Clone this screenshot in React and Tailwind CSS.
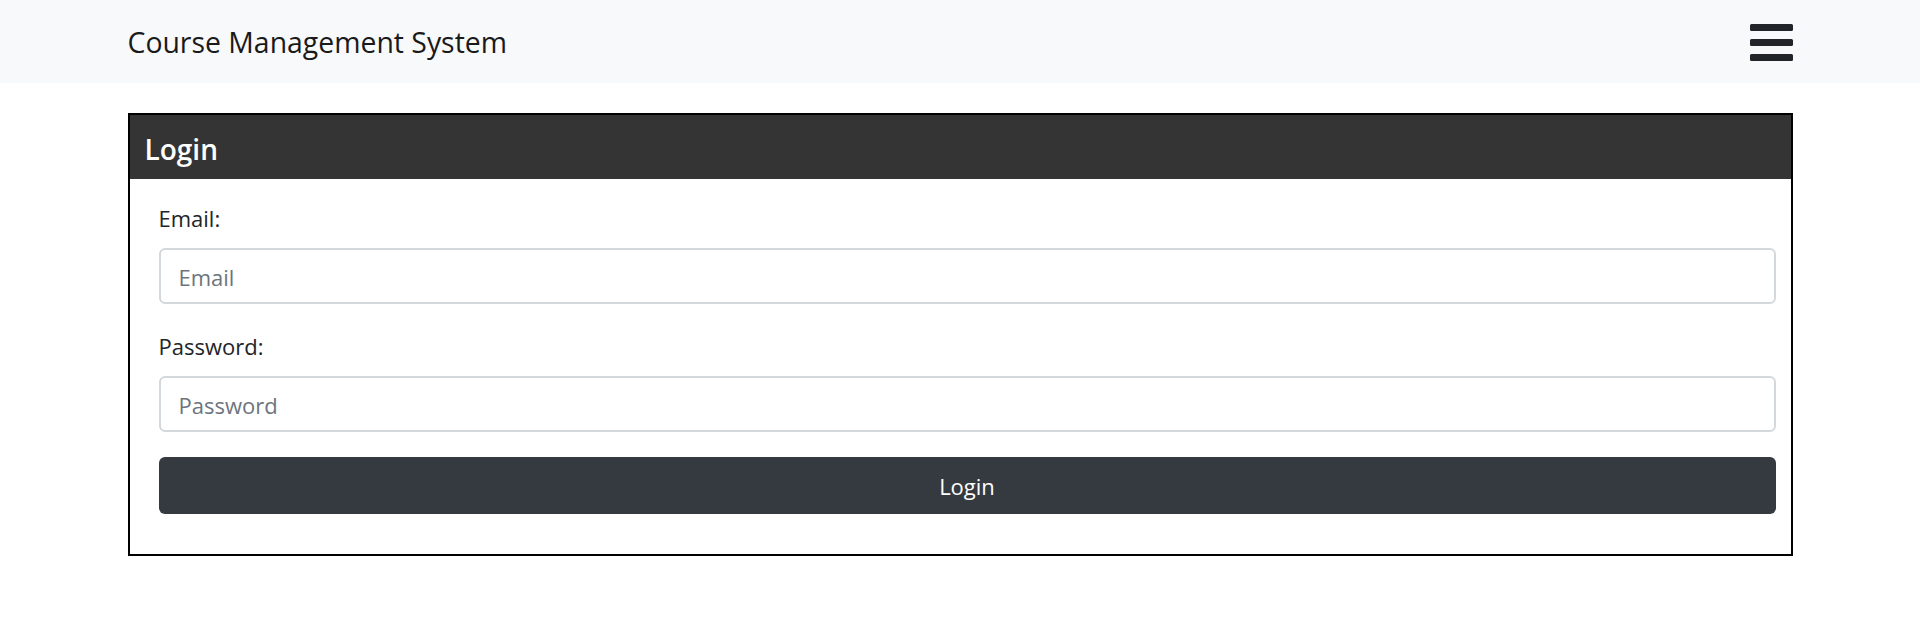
export default function App() {
  return (
    <div className="min-h-screen bg-white font-['Open_Sans',sans-serif] text-[#212529]">
      <nav className="h-[83px] bg-[#f8f9fa]">
        <div className="mx-auto flex h-full w-[1665px] items-center justify-between">
          <span className="text-[28.4px] leading-[42px] text-[#1a1a1a]">Course Management System</span>
          <div className="flex flex-col gap-[8px] pt-[1px]">
            <span className="block h-[7px] w-[43px] rounded-[1.5px] bg-[#212529]" />
            <span className="block h-[7px] w-[43px] rounded-[1.5px] bg-[#212529]" />
            <span className="block h-[7px] w-[43px] rounded-[1.5px] bg-[#212529]" />
          </div>
        </div>
      </nav>
      <main className="mx-auto mt-[30px] w-[1665px]">
        <div className="border-2 border-black">
          <div className="flex h-[64px] items-center bg-[#343434] px-[15px] pt-[4px]">
            <h3 className="text-[28px] font-semibold text-white">Login</h3>
          </div>
          <form className="pb-[40px] pl-[29px] pr-[15px] pt-[21px]" onSubmit={(e) => e.preventDefault()}>
            <div className="mb-[24px]">
              <label className="mb-[12px] block text-[22px] leading-[36px]">Email:</label>
              <input
                type="email"
                placeholder="Email"
                className="block h-[56px] w-full rounded-[6px] border-2 border-[#d3d8dd] px-[18px] pt-[2px] text-[22px] outline-none placeholder:text-[#6c757d]"
              />
            </div>
            <div className="mb-[25px]">
              <label className="mb-[12px] block text-[22px] leading-[36px]">Password:</label>
              <input
                type="password"
                placeholder="Password"
                className="block h-[56px] w-full rounded-[6px] border-2 border-[#d3d8dd] px-[18px] pt-[2px] text-[22px] outline-none placeholder:text-[#6c757d]"
              />
            </div>
            <button
              type="submit"
              className="block h-[57px] w-full rounded-[6px] bg-[#343a40] pt-[2px] text-[22px] text-white"
            >
              Login
            </button>
          </form>
        </div>
      </main>
    </div>
  );
}
